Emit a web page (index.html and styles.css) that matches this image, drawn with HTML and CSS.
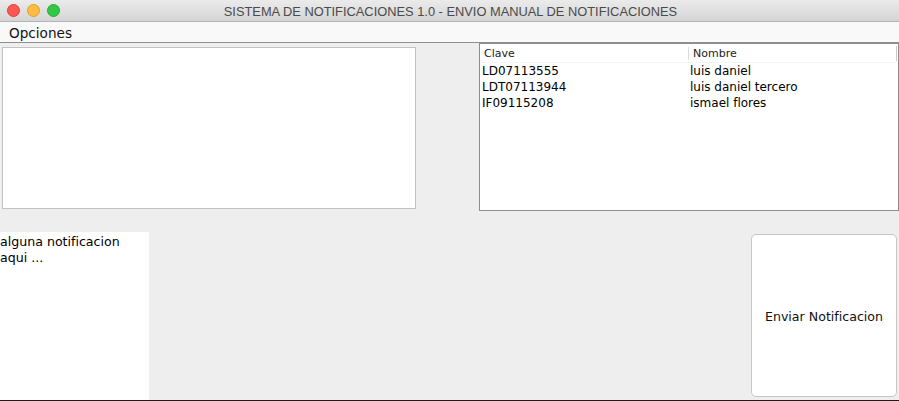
FILE: index.html
```html
<!DOCTYPE html>
<html lang="es">
<head>
<meta charset="utf-8">
<title>SISTEMA DE NOTIFICACIONES 1.0</title>
<link rel="stylesheet" href="styles.css">
</head>
<body>
<div class="window">
  <div class="titlebar">
    <div class="lights">
      <span class="light red"></span>
      <span class="light yellow"></span>
      <span class="light green"></span>
    </div>
    <div class="title">SISTEMA DE NOTIFICACIONES 1.0 - ENVIO MANUAL DE NOTIFICACIONES</div>
  </div>
  <div class="menubar"><span class="menu-item">Opciones</span></div>
  <div class="content">
    <div class="top-row">
      <div class="textarea"></div>
      <div class="table-box">
        <div class="thead">
          <div class="th col1">Clave</div>
          <div class="th col2">Nombre</div>
        </div>
        <div class="tr"><div class="td col1">LD07113555</div><div class="td col2">luis daniel</div></div>
        <div class="tr"><div class="td col1">LDT07113944</div><div class="td col2">luis daniel tercero</div></div>
        <div class="tr"><div class="td col1">IF09115208</div><div class="td col2">ismael flores</div></div>
        <span class="scroll-mark"></span>
      </div>
    </div>
    <div class="bottom-row">
      <div class="notif">alguna notificacion<br>aqui ...</div>
      <button class="send-btn">Enviar Notificacion</button>
    </div>
  </div>
  <div class="bottom-edge"></div>
</div>
</body>
</html>
```

FILE: styles.css
```css
* { box-sizing: border-box; }
html, body {
  margin: 0;
  padding: 0;
  width: 899px;
  height: 401px;
  overflow: hidden;
  background: #eeeeee;
}
.window {
  width: 899px;
  height: 401px;
  display: flex;
  flex-direction: column;
  font-family: "DejaVu Sans", "Liberation Sans", sans-serif;
  color: #000;
}
.titlebar {
  height: 22px;
  flex: none;
  position: relative;
  background: linear-gradient(#ebebeb, #d5d5d5);
  border-bottom: 1px solid #b3b3b3;
  display: flex;
  align-items: center;
  justify-content: center;
}
.lights {
  position: absolute;
  left: 7px;
  top: 4px;
  display: flex;
  gap: 7px;
}
.light {
  width: 13px;
  height: 13px;
  border-radius: 50%;
  display: block;
}
.red { background: #fc5753; border: 1px solid #df3d38; }
.yellow { background: #fdbc40; border: 1px solid #de9e27; }
.green { background: #33c748; border: 1px solid #27aa35; }
.title {
  font-family: "Liberation Sans", Arial, sans-serif;
  font-size: 12.85px;
  color: #4a4a4a;
  margin-left: 2px;
  padding-top: 1px;
}
.menubar {
  height: 21px;
  flex: none;
  background: #f9f9f9;
  border-bottom: 1px solid #8f8f8f;
  display: flex;
  align-items: center;
  padding-left: 9px;
}
.menu-item {
  font-size: 13.6px;
  color: #111;
  padding-top: 1px;
}
.content {
  flex: 1;
  display: flex;
  flex-direction: column;
}
.top-row {
  display: flex;
  align-items: flex-start;
  height: 168px;
  flex: none;
}
.textarea {
  margin-top: 4px;
  margin-left: 2px;
  width: 414px;
  height: 162px;
  background: #fff;
  border: 1px solid #c2c2c2;
}
.table-box {
  margin-left: auto;
  width: 420px;
  height: 168px;
  background: #fff;
  border: 1px solid #8e8e8e;
  position: relative;
  font-size: 12px;
}
.thead {
  display: flex;
  height: 19px;
  font-size: 11px;
  color: #222;
  align-items: center;
  border-bottom: 1px solid #f4f4f4;
}
.th.col1 { width: 208px; padding-left: 4px; }
.th.col2 { padding-left: 4px; border-left: 1px solid #dcdcdc; height: 13px; line-height: 13px; }
.tr {
  display: flex;
  height: 16px;
  align-items: center;
}
.td.col1 { width: 208px; padding-left: 2px; }
.td.col2 { padding-left: 2px; }
.scroll-mark {
  position: absolute;
  right: 1px;
  top: 2px;
  width: 1px;
  height: 15px;
  background: #c8c8c8;
}
.bottom-row {
  margin-top: 21px;
  display: flex;
  justify-content: space-between;
  align-items: flex-start;
  flex: 1;
}
.notif {
  width: 149px;
  height: 168px;
  background: #fff;
  font-size: 12.6px;
  line-height: 16px;
  padding-top: 2px;
  padding-left: 0;
  color: #000;
}
.send-btn {
  margin-top: 2px;
  margin-right: 2px;
  width: 146px;
  height: 163px;
  background: #fff;
  border: 1px solid #c6c6c6;
  border-radius: 5px;
  font-family: "DejaVu Sans", "Liberation Sans", sans-serif;
  font-size: 12.6px;
  color: #111;
  padding: 0;
  padding-top: 2px;
}
.bottom-edge {
  height: 1px;
  flex: none;
  background: #1b1b1b;
}
```
